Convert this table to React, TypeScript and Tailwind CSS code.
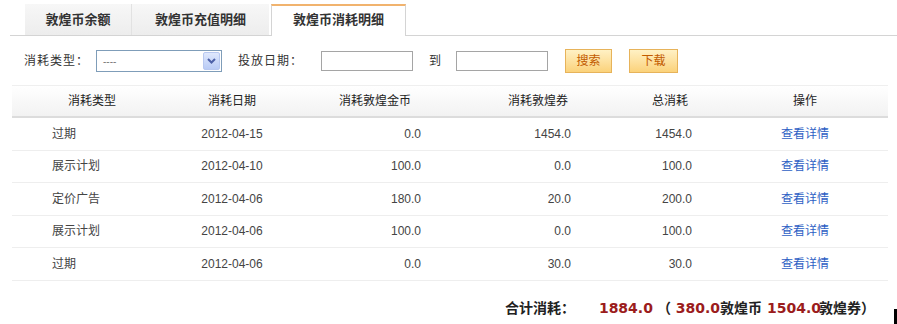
import React from "react"

const rows = [
  { type: "过期", date: "2012-04-15", coin: "0.0", ticket: "1454.0", total: "1454.0" },
  { type: "展示计划", date: "2012-04-10", coin: "100.0", ticket: "0.0", total: "100.0" },
  { type: "定价广告", date: "2012-04-06", coin: "180.0", ticket: "20.0", total: "200.0" },
  { type: "展示计划", date: "2012-04-06", coin: "100.0", ticket: "0.0", total: "100.0" },
  { type: "过期", date: "2012-04-06", coin: "0.0", ticket: "30.0", total: "30.0" },
]

const cols = "grid grid-cols-[160px_120px_166px_160px_104px_166px]"

export default function App() {
  return (
    <div
      className="relative w-[897px] h-[324px] overflow-hidden bg-white text-[12px] text-[#333]"
      style={{ fontFamily: '"Liberation Sans", Arial, "Noto Sans CJK SC", sans-serif' }}
    >
      {/* Tabs */}
      <div className="ml-[10px] mt-[4px] flex h-[32px] items-end border-b border-[#d4d4d4] pl-[15px]">
        <div className="flex h-[31px] w-[107px] items-center justify-center border-r border-[#e2e2e2] bg-gradient-to-b from-[#f7f7f7] to-[#ededed] text-[13px] font-bold text-[#333]">
          敦煌币余额
        </div>
        <div className="flex h-[31px] w-[137px] items-center justify-center bg-gradient-to-b from-[#f7f7f7] to-[#ededed] text-[13px] font-bold text-[#333]">
          敦煌币充值明细
        </div>
        <div className="-mb-px ml-[2px] flex h-[32px] w-[135px] items-center justify-center border-x border-t-2 border-x-[#d4d4d4] border-t-[#f1b36e] bg-white pb-[2px] text-[13px] font-bold text-[#333]">
          敦煌币消耗明细
        </div>
      </div>

      {/* Filter row */}
      <div className="mt-[13px] flex h-[24px] items-center pl-[24px]">
        <span className="tracking-[1px]">消耗类型：</span>
        <div className="ml-[7px] flex h-[22px] w-[126px] items-center justify-between border border-[#7f9db9] bg-white pl-[6px] pr-[1px]">
          <span className="text-[10px] text-[#777]">----</span>
          <span className="flex h-[18px] w-[17px] items-center justify-center rounded-[2px] border border-[#b8c8f0] bg-gradient-to-b from-[#dfe8fd] to-[#b9cbf5]">
            <svg width="9" height="6" viewBox="0 0 9 6">
              <path d="M1 1l3.5 3.5L8 1" fill="none" stroke="#4d61a8" strokeWidth="2" />
            </svg>
          </span>
        </div>
        <span className="ml-[16px] tracking-[1px]">投放日期：</span>
        <div className="ml-[18px] h-[20px] w-[92px] border border-[#a5a5a5] bg-white" />
        <span className="ml-[16px]">到</span>
        <div className="ml-[15px] h-[20px] w-[92px] border border-[#a5a5a5] bg-white" />
        <button className="ml-[17px] flex h-[24px] w-[47px] items-center justify-center border border-[#e7b35a] bg-gradient-to-b from-[#fff1c4] to-[#fbd27a] text-[12px] text-[#c25b00]">
          搜索
        </button>
        <button className="ml-[17px] flex h-[24px] w-[49px] items-center justify-center border border-[#e7b35a] bg-gradient-to-b from-[#fff1c4] to-[#fbd27a] text-[12px] text-[#c25b00]">
          下载
        </button>
      </div>

      {/* Table */}
      <div className="ml-[12px] mt-[12px] w-[876px]">
        <div className={`${cols} h-[33px] items-center border-t border-b-2 border-t-[#efefef] border-b-[#dcdcdc] bg-gradient-to-b from-white to-[#f2f2f2] text-[#222]`}>
          <div className="text-center">消耗类型</div>
          <div className="text-center">消耗日期</div>
          <div className="text-center">消耗敦煌金币</div>
          <div className="text-center">消耗敦煌券</div>
          <div className="text-center">总消耗</div>
          <div className="text-center">操作</div>
        </div>
        {rows.map((r, i) => (
          <div key={i} className={`${cols} h-[32.5px] items-center border-b border-[#eeeeee] text-[#444]`}>
            <div className="pl-[40px]">{r.type}</div>
            <div className="text-center">{r.date}</div>
            <div className="pr-[37px] text-right">{r.coin}</div>
            <div className="pr-[47px] text-right">{r.ticket}</div>
            <div className="pr-[30px] text-right">{r.total}</div>
            <div className="text-center">
              <a className="text-[#2e5fc4]">查看详情</a>
            </div>
          </div>
        ))}
      </div>

      {/* Summary */}
      <div
        className="mt-[17px] flex items-center justify-end whitespace-pre pr-[14px] text-[14px] font-bold text-[#222]"
        style={{ fontFamily: '"DejaVu Sans", Verdana, "Noto Sans CJK SC", sans-serif' }}
      >
        <span>合计消耗：</span>
        <span className="ml-[24px] text-[#9b1c1c]">1884.0</span>
        <span className="ml-[4px]">（ </span>
        <span className="text-[#9b1c1c]">380.0</span>
        <span>敦煌币 </span>
        <span className="mr-[-2px] text-[#9b1c1c]">1504.0</span>
        <span className="pr-[8px]">敦煌券）</span>
      </div>
      <div className="absolute right-0 top-[309px] h-[15px] w-[3px] bg-black" />
    </div>
  )
}
